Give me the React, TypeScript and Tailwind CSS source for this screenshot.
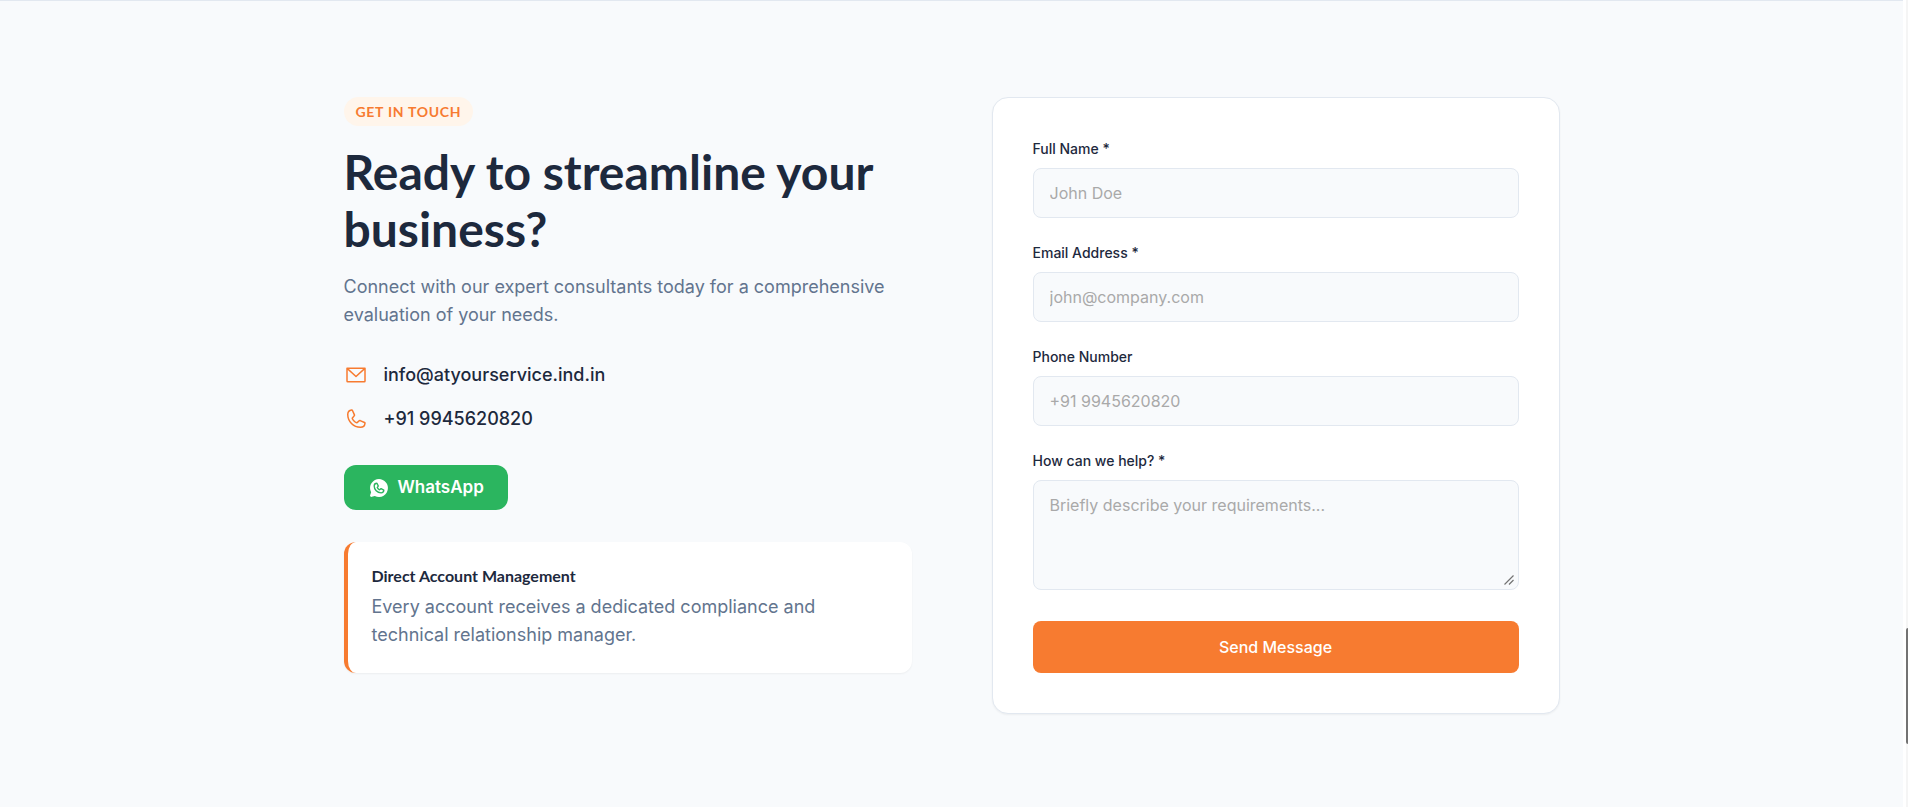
import React from "react";
import { PiEnvelopeSimple, PiPhone, PiWhatsappLogoFill } from "react-icons/pi";

type Field = { id: string; label: string; type: string; placeholder: string };

const fields: Field[] = [
  { id: "name", label: "Full Name *", type: "text", placeholder: "John Doe" },
  { id: "email", label: "Email Address *", type: "email", placeholder: "john@company.com" },
  { id: "phone", label: "Phone Number", type: "tel", placeholder: "+91 9945620820" },
];

const contacts = [
  { href: "mailto:info@atyourservice.ind.in", text: "info@atyourservice.ind.in", Icon: PiEnvelopeSimple },
  { href: "tel:+919945620820", text: "+91 9945620820", Icon: PiPhone },
];

const labelClass = "block mb-2 text-sm leading-[22px] font-medium text-slate-800";
const controlClass =
  "block w-full px-4 rounded-lg border border-slate-200 bg-slate-50 text-base text-slate-800 placeholder:text-[#a9a9a9] outline-none focus:border-[#f77b30]";

function ContactInfo() {
  return (
    <div className="flex flex-col items-start">
      <span className="px-3 py-1 rounded-full bg-[#fff5eb] font-['Lato'] text-sm leading-[21px] font-bold tracking-wider uppercase text-[#f77b30]">
        Get in touch
      </span>
      <h2 className="mt-[17px] font-['Lato'] text-5xl leading-[57px] font-bold text-slate-800">
        Ready to streamline your business?
      </h2>
      <p className="mt-4 text-lg leading-7 text-slate-500">
        Connect with our expert consultants today for a comprehensive evaluation of your needs.
      </p>

      <div className="mt-8 flex flex-col gap-4">
        {contacts.map(({ href, text, Icon }) => (
          <a key={href} href={href} className="flex items-center gap-4 text-lg leading-7 font-medium text-slate-800">
            <Icon className="size-6 text-[#f77b30]" />
            {text}
          </a>
        ))}
      </div>

      <a
        href="https://wa.me/919945620820"
        className="mt-8 flex h-[45px] items-center gap-2 rounded-xl bg-[#2bb55f] px-6 text-[17px] font-semibold text-white"
      >
        <PiWhatsappLogoFill className="size-[22px]" />
        WhatsApp
      </a>

      <div className="mt-8 w-full rounded-xl border-l-4 border-[#f77b30] bg-white p-6 shadow-xs">
        <h4 className="mb-2 font-['Lato'] text-base leading-[19px] font-bold text-slate-800">
          Direct Account Management
        </h4>
        <p className="text-lg leading-7 text-slate-500">
          Every account receives a dedicated compliance and technical relationship manager.
        </p>
      </div>
    </div>
  );
}

function ContactForm() {
  return (
    <form
      className="rounded-2xl border border-slate-200 bg-white p-10 shadow-xs"
      onSubmit={(e) => e.preventDefault()}
    >
      {fields.map((f) => (
        <div key={f.id} className="mb-6">
          <label htmlFor={f.id} className={labelClass}>{f.label}</label>
          <input id={f.id} type={f.type} placeholder={f.placeholder} className={`${controlClass} h-[50px]`} />
        </div>
      ))}
      <div className="relative mb-[31px]">
        <label htmlFor="message" className={labelClass}>How can we help? *</label>
        <textarea
          id="message"
          placeholder="Briefly describe your requirements..."
          className={`${controlClass} h-[110px] resize-none py-3`}
        />
        {/* resize grip */}
        <svg
          viewBox="0 0 10 10"
          className="pointer-events-none absolute right-[5px] bottom-[5px] size-[10px] stroke-neutral-500"
          aria-hidden="true"
        >
          <path d="M0.5 9.5L9.5 0.5M5 9.5L9.5 5" strokeWidth="1.2" fill="none" />
        </svg>
      </div>
      <button type="submit" className="block h-[52px] w-full rounded-lg bg-[#f77b30] text-base font-medium text-white">
        Send Message
      </button>
    </form>
  );
}

export default function App() {
  return (
    <div className="flex h-screen overflow-hidden bg-white font-['Inter',sans-serif]">
      <section id="contact" className="min-h-full flex-1 border-t border-slate-200 bg-slate-50 py-24">
        <div className="mx-auto grid max-w-7xl grid-cols-1 items-start gap-20 px-8 lg:grid-cols-2">
          <ContactInfo />
          <ContactForm />
        </div>
      </section>
      <div className="ml-[3px] w-[2px] bg-neutral-100 pt-[628px]">
        <div className="h-[116px] rounded-l-full bg-neutral-500" />
      </div>
    </div>
  );
}
